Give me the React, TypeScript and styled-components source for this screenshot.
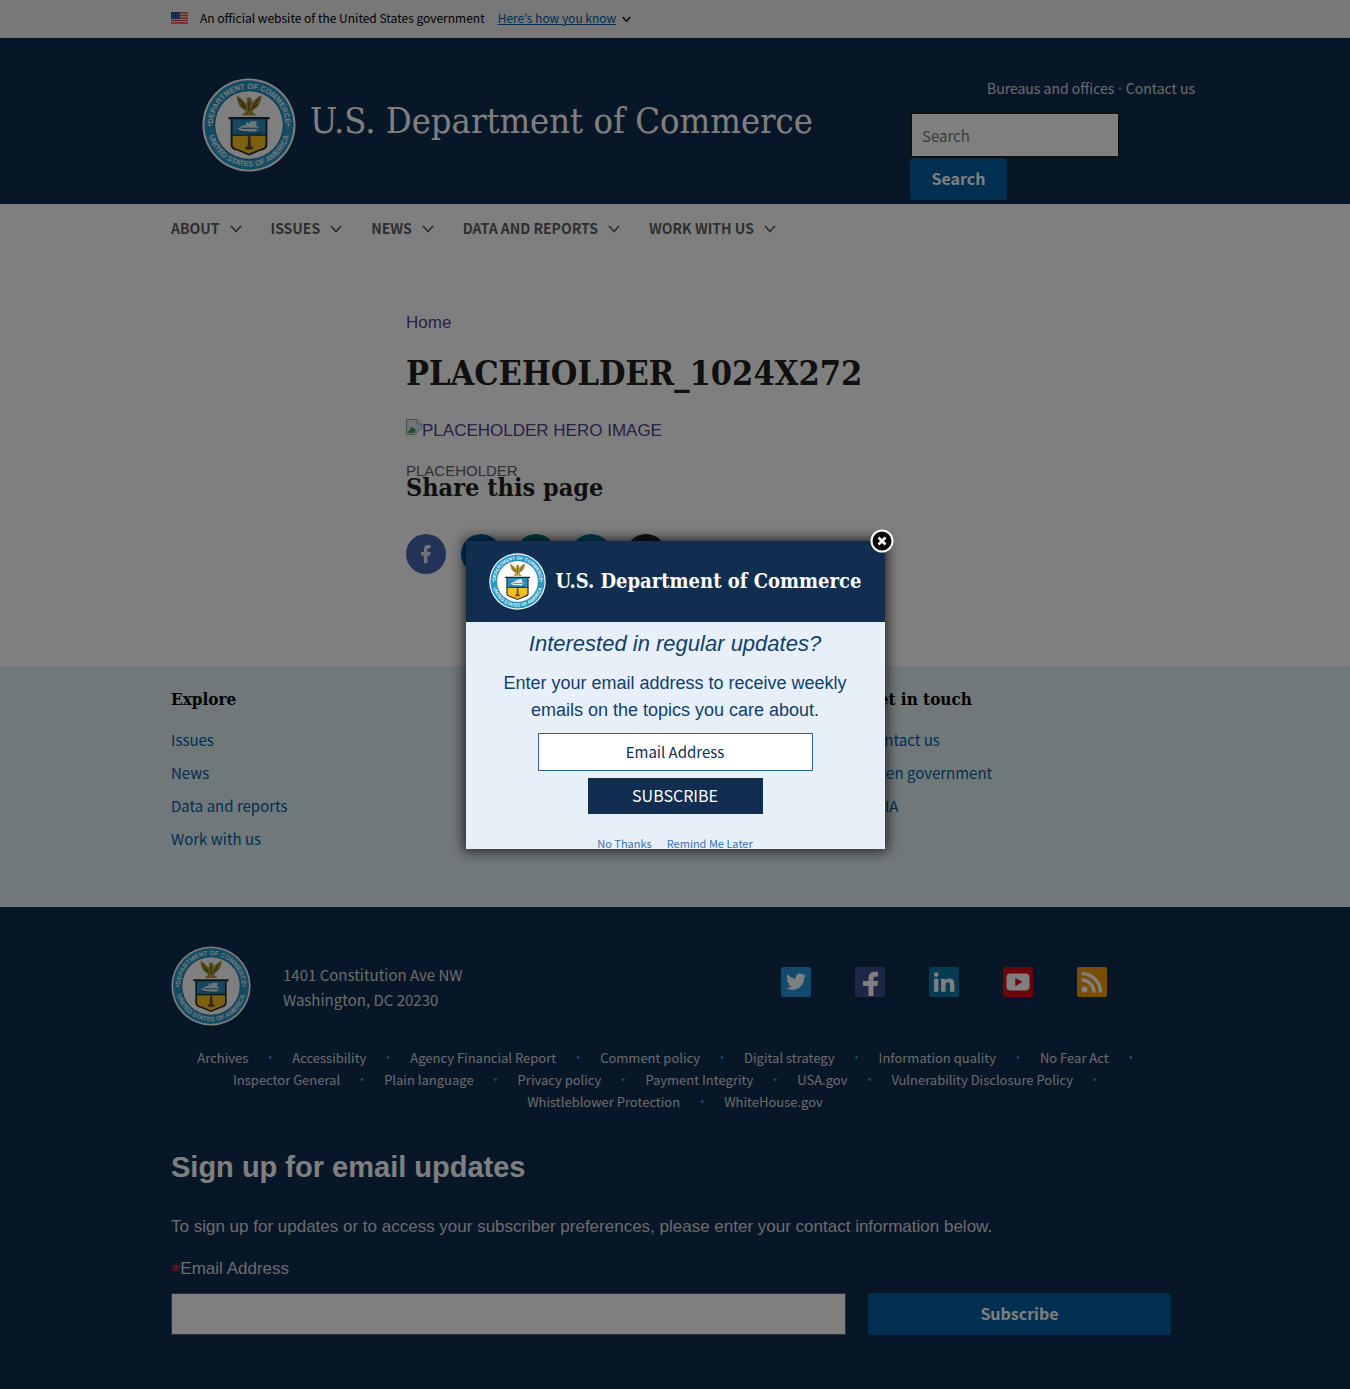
import React from "react";
import styled, { createGlobalStyle } from "styled-components";

const sans = `"Noto Sans CJK KR", "Noto Sans", sans-serif`;
const serif = `"DejaVu Serif Condensed", "DejaVu Serif", serif`;
const arial = `"Liberation Sans", Arial, sans-serif`;
const navy = "#112e51";
const blue = "#005ea2";

const GlobalStyle = createGlobalStyle`
  *, *::before, *::after { box-sizing: border-box; }
  html, body { margin: 0; background: #fff; }
  body { font-family: ${sans}; font-size: 15px; line-height: 24px; color: #212121; }
  h1, h2, h3, p, ul, figure, address { margin: 0; padding: 0; font-style: normal; }
  ul { list-style: none; }
  a { color: inherit; text-decoration: none; }
  button, input { font: inherit; margin: 0; border: 0; border-radius: 0; }
  button { cursor: pointer; }
  svg { display: block; flex: none; }
`;

const Container = styled.div`
  max-width: 1040px;
  margin: 0 auto;
  padding: 0 16px;
`;

/* Government banner */
const Banner = styled.div`
  background: #f1f1f1;
  font-size: 12px;
  line-height: 36px;
`;
const BannerRow = styled(Container)`
  display: flex;
  align-items: center;
  padding-bottom: 2px;
`;
const BannerText = styled.p`
  margin: 0 13px 0 12px;
  color: #000;
`;
const BannerButton = styled.button`
  display: flex;
  align-items: center;
  gap: 6px;
  padding: 0;
  background: none;
  color: #000;
  span { color: ${blue}; text-decoration: underline; }
`;

/* Header */
const HeaderBar = styled.header`
  background: ${navy};
`;
const HeaderRow = styled(Container)`
  display: flex;
  align-items: flex-start;
  padding: 40px 0 4px 47px;
`;
const Brand = styled.a`
  display: flex;
  gap: 14px;
  flex: 1;
  color: #fff;
  font-family: ${serif};
  font-size: 36px;
  line-height: 86px;
  white-space: nowrap;
`;
const HeaderSide = styled.div`
  width: 285px;
`;
const SideLinks = styled.p`
  display: flex;
  justify-content: flex-end;
  gap: 4px;
  margin-bottom: 13px;
  color: #5b8fb9;
  font-family: ${arial};
  font-size: 10px;
  line-height: 21px;
  a { color: #d6d7d9; font-family: ${sans}; font-size: 14px; }
`;
const SearchField = styled.input`
  display: block;
  width: 210px;
  height: 46px;
  padding: 0 10px;
  border: 2px solid #212121;
  background: #fff;
  color: #212121;
  font-size: 15px;
  &::placeholder { color: #757575; opacity: 1; }
`;
const PrimaryButton = styled.button<{ $wide?: boolean }>`
  width: ${(p) => (p.$wide ? "100%" : "97px")};
  height: 42px;
  padding: 0 0 2px;
  border-radius: 4px;
  background: ${blue};
  color: #fff;
  font-size: 16px;
  font-weight: 700;
`;

/* Navigation */
const NavList = styled.ul`
  display: flex;
  gap: 29px;
  padding: 12px 0 14px;
`;
const NavButton = styled.button`
  display: flex;
  align-items: center;
  gap: 10px;
  padding: 0;
  background: none;
  color: #5b5d61;
  font-size: 14px;
  font-weight: 700;
  line-height: 24px;
`;

/* Main */
const Main = styled(Container).attrs({ as: "main" })`
  padding: 57px 16px 92px 251px;
  font-family: ${arial};
  font-size: 17px;
`;
const Crumb = styled.nav`
  color: #54408f;
`;
const PageTitle = styled.h1`
  margin: 16px 0 24px;
  color: #212121;
  font-family: ${serif};
  font-size: 34px;
  line-height: 44px;
`;
const HeroLink = styled.a`
  display: flex;
  color: #54408f;
`;
const Caption = styled.figcaption`
  margin-top: 21px;
  color: #5b616b;
  font-size: 15px;
  line-height: 14px;
`;
const ShareTitle = styled.h2`
  color: #212121;
  font-family: ${serif};
  font-size: 25px;
  line-height: 20px;
`;
const ShareList = styled.ul`
  display: flex;
  gap: 15px;
  margin-top: 36px;
`;
const ShareLink = styled.a<{ $color: string }>`
  display: grid;
  place-items: center;
  width: 40px;
  height: 40px;
  border-radius: 50%;
  background: ${(p) => p.$color};
`;

/* Footer */
const FooterTop = styled.div`
  background: #e2f0f5;
`;
const FooterColumns = styled(Container)`
  display: grid;
  grid-template-columns: repeat(3, 1fr);
  column-gap: 34px;
  padding-top: 21px;
  padding-bottom: 52px;
`;
const FooterColumn = styled.section<{ $column: number }>`
  grid-column: ${(p) => p.$column};
  h3 {
    margin-bottom: 12px;
    color: #000;
    font-family: ${serif};
    font-size: 17px;
    line-height: 24px;
  }
  li { line-height: 33px; }
  a { color: ${blue}; }
`;
const FooterBottom = styled.div`
  padding: 39px 0 55px;
  background: ${navy};
  color: #d6d7d9;
`;
const AgencyRow = styled.div`
  display: flex;
  align-items: center;
  gap: 32px;
`;
const Address = styled.address`
  flex: 1;
  padding-top: 2px;
  line-height: 25px;
`;
const SocialList = styled.ul`
  display: flex;
  gap: 44px;
  margin: 0 72px 8px 0;
`;
const PolicyList = styled.ul`
  display: flex;
  flex-wrap: wrap;
  justify-content: center;
  margin-top: 21px;
  font-size: 13px;
  line-height: 22px;
`;
const PolicyItem = styled.li`
  display: flex;
  &:not(:last-child)::after {
    content: "•";
    width: 44px;
    color: #3e94cf;
    font-family: ${arial};
    font-size: 10px;
    text-align: center;
  }
`;
const Signup = styled.form`
  margin-top: 34px;
  font-family: ${arial};
  font-size: 17px;
  h2 {
    color: #fff;
    font-size: 29px;
    line-height: 40px;
  }
  p { margin-top: 28px; }
  label { display: block; margin: 18px 0 11px; }
`;
const Required = styled.span`
  color: #e31c3d;
  font-size: 24px;
  line-height: 20px;
  vertical-align: -6px;
`;
const SignupRow = styled.div`
  display: grid;
  grid-template-columns: 675fr 303fr;
  gap: 22px;
  padding-right: 8px;
  button { font-family: ${sans}; }
`;
const SignupInput = styled.input`
  width: 100%;
  height: 42px;
  padding: 0 10px;
  border: 1px solid #5b616b;
  background: #fff;
`;

/* Subscription dialog */
const Overlay = styled.div`
  position: fixed;
  inset: 0;
  display: grid;
  place-items: center;
  background: rgba(0, 0, 0, 0.5);
`;
const Dialog = styled.div`
  position: relative;
  width: 419px;
  box-shadow: 0 0 12px 2px rgba(0, 0, 0, 0.75);
`;
const DialogBody = styled.div`
  display: flex;
  flex-direction: column;
  align-items: center;
  height: 308px;
  overflow: hidden;
  background: #e7eff8;
  color: ${navy};
  font-family: ${arial};
  text-align: center;
`;
const DialogBrand = styled.div`
  display: flex;
  align-items: center;
  align-self: stretch;
  justify-content: center;
  gap: 10px;
  height: 81px;
  flex: none;
  background: ${navy};
  color: #fff;
  font-family: ${serif};
  font-size: 20px;
  font-weight: 700;
  white-space: nowrap;
`;
const DialogTitle = styled.h2`
  margin-top: 6px;
  color: #123f6d;
  font-size: 22px;
  font-style: italic;
  font-weight: 400;
  line-height: 32px;
`;
const DialogText = styled.p`
  margin: 10px 0 9px;
  padding: 0 32px;
  color: #123f6d;
  font-size: 18px;
  line-height: 27px;
`;
const DialogInput = styled.input`
  flex: none;
  width: 275px;
  height: 38px;
  border: 1px solid #2f6199;
  background: #fff;
  font-family: ${sans};
  font-size: 15px;
  text-align: center;
  &::placeholder { color: ${navy}; opacity: 1; }
`;
const DialogSubmit = styled.button`
  flex: none;
  width: 175px;
  height: 36px;
  margin-top: 7px;
  padding: 0 0 2px;
  background: ${navy};
  color: #fff;
  font-family: ${sans};
  font-size: 16px;
`;
const DialogLinks = styled.div`
  display: flex;
  gap: 15px;
  margin-top: 19px;
  color: #3a76b5;
  font-family: ${sans};
  font-size: 11px;
  line-height: 20px;
`;
const CloseButton = styled.button`
  position: absolute;
  top: -12px;
  right: -9px;
  padding: 0;
  border-radius: 50%;
  background: none;
`;

const Seal = ({ size, id }: { size: number; id: string }) => (
  <svg width={size} height={size} viewBox="0 0 100 100" role="img" aria-label="Department of Commerce seal">
    <defs>
      <path id={`${id}-top`} d="M11.500 50 A38.500 38.500 0 0 1 88.500 50" />
      <path id={`${id}-bottom`} d="M6 50 A44 44 0 0 0 94 50" />
    </defs>
    <circle cx="50" cy="50" r="49.500" fill="#fff" />
    <circle cx="50" cy="50" r="47.500" fill="#2798c6" />
    <circle cx="50" cy="50" r="36.500" fill="#fff" />
    <circle cx="50" cy="50" r="36.500" fill="none" stroke="#12668f" strokeWidth="1" />
    <g fill="#e6f3fa" fontFamily="Liberation Sans, sans-serif" fontSize="8" fontWeight="700" textAnchor="middle">
      <text><textPath href={`#${id}-top`} startOffset="50%">DEPARTMENT OF COMMERCE</textPath></text>
      <text><textPath href={`#${id}-bottom`} startOffset="50%">UNITED STATES OF AMERICA</textPath></text>
    </g>
    <circle cx="8" cy="50" r="1.200" fill="#fff" />
    <circle cx="92" cy="50" r="1.200" fill="#fff" />
    <path d="M37 18 C39 20 44 23 47 27 L48 25 L47 22 L50 20 L53 22 L53 26 C56 23 61 19 63.500 18.500 C63 25 61 30 56 33 L53.500 36 L58 40 H42 L46.500 36 L43.500 33 C39 30 37 25 37 18Z" fill="#b3953a" />
    <path d="M39 22 L46 31 M41 28 L47 33 M61 21 L54 31 M59 28 L53 33 M50 24 V35" stroke="#5a4c18" strokeWidth="1.200" />
    <path d="M28 41.500 H72 V44 H69.500 V72 Q69 76 62 77.500 L50 82.500 L38 77.500 Q31 76 30.500 72 V44 H28Z" fill="#1c2733" />
    <path d="M32.500 44 H67.500 V60 H32.500Z" fill="#2c8fc0" />
    <path d="M32.500 61.500 H67.500 V71.500 Q67 74.500 61 76 L50 80.500 L39 76 Q33 74.500 32.500 71.500Z" fill="#f5c020" />
    <path d="M38 54 L44 50 H47 V47 H49 V49 L52 46 H58 V51 L61 53 L57 57 H43Z" fill="#d9ebf4" />
    <path d="M35 58 Q43 56 50 58 T65 58 M42 53.500 H60" stroke="#17506f" strokeWidth="1" fill="none" />
    <path d="M49 62 H51.500 L52 73 H54 V76 H46 V73 H48.500Z" fill="#6a4a20" />
  </svg>
);

const Flag = () => (
  <svg width="17" height="12" viewBox="0 0 17 12" aria-hidden="true">
    <rect width="17" height="12" fill="#fff" />
    <path d="M0 1H17M0 3.500H17M0 6H17M0 8.500H17M0 11H17" stroke="#d9402c" strokeWidth="1.500" />
    <rect width="9" height="7" fill="#1f4b9f" />
    <path d="M1 2H8M1 4H8M1 6H8" stroke="#b8c8e8" strokeWidth=".5" strokeDasharray="1 1" />
  </svg>
);

const Chevron = ({ size }: { size: number }) => (
  <svg width={size} height={size} viewBox="0 0 12 12" fill="none" stroke="currentColor" strokeWidth="1.800" aria-hidden="true">
    <path d="M1 4 L6 9.500 L11 4" />
  </svg>
);

const BrokenImage = () => (
  <svg width="16" height="16" viewBox="0 0 16 16" aria-hidden="true">
    <path d="M.5 .5H11L15.500 5V9L12 12L9 15.500H.5Z" fill="#dce8f8" stroke="#9a9a9a" />
    <path d="M11 .5V5H15.500" fill="#fff" stroke="#9a9a9a" />
    <path d="M2 13 L6 8 L10 11 L8 14H2Z" fill="#4a9a48" />
    <path d="M3 6Q3 4 5 4Q8 3 8 6Z" fill="#fff" />
  </svg>
);

const glyphs: Record<string, string> = {
  facebook: "M13.500 22v-8.500h3l.5-3.700h-3.500V7.500c0-1 .4-1.700 1.800-1.700H17V2.400C16.600 2.300 15.500 2.200 14.300 2.200c-2.800 0-4.600 1.700-4.600 4.700v2.900H6.600v3.700h3.100V22z",
  twitter: "M23 4.900c-.8.400-1.700.6-2.600.7.900-.6 1.600-1.400 2-2.500-.9.500-1.800.9-2.900 1.100A4.500 4.500 0 0 0 11.800 8.300C8 8.100 4.700 6.300 2.500 3.600c-1.200 2-.6 4.700 1.400 6-.7 0-1.400-.2-2-.6 0 2.200 1.500 4.100 3.600 4.500-.6.200-1.400.2-2 .1.600 1.800 2.200 3.100 4.200 3.100A9 9 0 0 1 1 18.600c2 1.300 4.400 2 6.900 2 8.400 0 13.200-7.100 12.900-13.400.9-.6 1.600-1.400 2.200-2.300z",
  linkedin: "M3 9h4v12H3zM5 3a2.200 2.200 0 1 1 0 4.400A2.200 2.200 0 0 1 5 3zM9.500 9h3.800v1.700c.6-1.100 1.900-2 3.800-2 4 0 4.700 2.600 4.700 6V21h-4v-5.600c0-1.400 0-3.200-1.900-3.200s-2.300 1.500-2.300 3V21h-4z",
  mail: "M3 5h18v14H3zM3 5l9 8 9-8",
};
const Glyph = ({ name, size }: { name: string; size: number }) => (
  <svg width={size} height={size} viewBox="0 0 24 24" fill="#e4e6ee" aria-hidden="true"><path d={glyphs[name]} /></svg>
);

const SocialIcon = ({ name }: { name: string }) => {
  const fills: Record<string, string> = { twitter: "#2595db", facebook: "#3c4f8e", linkedin: "#0b78a8", youtube: "#d80a12", rss: "#f29a05" };
  return (
    <svg width="30" height="30" viewBox="0 0 30 30" aria-hidden="true">
      <rect width="30" height="30" rx="2" fill={fills[name]} />
      {name === "twitter" && <path transform="translate(4 4) scale(.92)" fill="#fff" d={glyphs.twitter} />}
      {name === "facebook" && <path fill="#fff" d="M13.500 29V19H8v-5h5.500V11c0-4 2.500-6.300 6.500-6.300h3v4.800h-2.200c-1.700 0-2.300.7-2.300 2V14h4.500l-.7 5h-3.800v10z" />}
      {name === "linkedin" && <path transform="translate(1.800 2) scale(1.080)" fill="#fff" d={glyphs.linkedin} />}
      {name === "youtube" && <><rect x="3.500" y="6.500" width="23" height="17" rx="4" fill="#fff" /><path d="M12.300 10.800L19.500 15L12.300 19.200Z" fill="#d80a12" /></>}
      {name === "rss" && <><circle cx="7.500" cy="22.500" r="3" fill="#fff" /><path d="M4.500 13A12.500 12.500 0 0 1 17 25.500M4.500 6.500A19 19 0 0 1 23.500 25.500" fill="none" stroke="#fff" strokeWidth="3.400" /></>}
    </svg>
  );
};

const navItems = ["ABOUT", "ISSUES", "NEWS", "DATA AND REPORTS", "WORK WITH US"];
const shares = [
  { label: "Facebook", color: "#4767b0", icon: "facebook" },
  { label: "LinkedIn", color: "#0068b8", icon: "linkedin" },
  { label: "Email", color: "#007a7a", icon: "mail" },
  { label: "Twitter", color: "#0079c0", icon: "twitter" },
  { label: "X", color: "#222222", icon: "twitter" },
];
const columns = [
  { title: "Explore", column: 1, links: ["Issues", "News", "Data and reports", "Work with us"] },
  { title: "Get in touch", column: 3, links: ["Contact us", "Open government", "FOIA"] },
];
const socials = ["twitter", "facebook", "linkedin", "youtube", "rss"];
const policies = [
  "Archives", "Accessibility", "Agency Financial Report", "Comment policy", "Digital strategy",
  "Information quality", "No Fear Act", "Inspector General", "Plain language", "Privacy policy",
  "Payment Integrity", "USA.gov", "Vulnerability Disclosure Policy", "Whistleblower Protection", "WhiteHouse.gov",
];

export default function App() {
  return (
    <>
      <GlobalStyle />
      <Banner>
        <BannerRow>
          <Flag />
          <BannerText>An official website of the United States government</BannerText>
          <BannerButton type="button"><span>Here’s how you know</span><Chevron size={9} /></BannerButton>
        </BannerRow>
      </Banner>

      <HeaderBar>
        <HeaderRow>
          <Brand href="#"><Seal size={94} id="seal-header" />U.S. Department of Commerce</Brand>
          <HeaderSide>
            <SideLinks><a href="#">Bureaus and offices</a>•<a href="#">Contact us</a></SideLinks>
            <form role="search">
              <SearchField type="search" placeholder="Search" aria-label="Search" />
              <PrimaryButton type="button">Search</PrimaryButton>
            </form>
          </HeaderSide>
        </HeaderRow>
      </HeaderBar>

      <Container as="nav">
        <NavList>
          {navItems.map((item) => (
            <li key={item}><NavButton type="button">{item}<Chevron size={12} /></NavButton></li>
          ))}
        </NavList>
      </Container>

      <Main>
        <Crumb><a href="#">Home</a></Crumb>
        <PageTitle>PLACEHOLDER_1024X272</PageTitle>
        <figure>
          <HeroLink href="#"><BrokenImage />PLACEHOLDER HERO IMAGE</HeroLink>
          <Caption>PLACEHOLDER</Caption>
        </figure>
        <ShareTitle>Share this page</ShareTitle>
        <ShareList>
          {shares.map((s) => (
            <li key={s.label}>
              <ShareLink href="#" aria-label={s.label} $color={s.color}><Glyph name={s.icon} size={22} /></ShareLink>
            </li>
          ))}
        </ShareList>
      </Main>

      <footer>
        <FooterTop>
          <FooterColumns>
            {columns.map((c) => (
              <FooterColumn key={c.title} $column={c.column}>
                <h3>{c.title}</h3>
                <ul>{c.links.map((l) => <li key={l}><a href="#">{l}</a></li>)}</ul>
              </FooterColumn>
            ))}
          </FooterColumns>
        </FooterTop>
        <FooterBottom>
          <Container>
            <AgencyRow>
              <Seal size={80} id="seal-footer" />
              <Address>1401 Constitution Ave NW<br />Washington, DC 20230</Address>
              <SocialList>
                {socials.map((s) => <li key={s}><a href="#" aria-label={s}><SocialIcon name={s} /></a></li>)}
              </SocialList>
            </AgencyRow>
            <PolicyList>
              {policies.map((p) => <PolicyItem key={p}><a href="#">{p}</a></PolicyItem>)}
            </PolicyList>
            <Signup>
              <h2>Sign up for email updates</h2>
              <p>To sign up for updates or to access your subscriber preferences, please enter your contact information below.</p>
              <label htmlFor="signup-email"><Required>*</Required>Email Address</label>
              <SignupRow>
                <SignupInput id="signup-email" type="email" />
                <PrimaryButton type="button" $wide>Subscribe</PrimaryButton>
              </SignupRow>
            </Signup>
          </Container>
        </FooterBottom>
      </footer>

      <Overlay>
        <Dialog role="dialog" aria-label="Subscribe">
          <DialogBody>
            <DialogBrand><Seal size={57} id="seal-dialog" />U.S. Department of Commerce</DialogBrand>
            <DialogTitle>Interested in regular updates?</DialogTitle>
            <DialogText>Enter your email address to receive weekly emails on the topics you care about.</DialogText>
            <DialogInput type="email" placeholder="Email Address" aria-label="Email Address" />
            <DialogSubmit type="button">SUBSCRIBE</DialogSubmit>
            <DialogLinks><a href="#">No Thanks</a><a href="#">Remind Me Later</a></DialogLinks>
          </DialogBody>
          <CloseButton type="button" aria-label="Close">
            <svg width="24" height="24" viewBox="0 0 24 24" aria-hidden="true">
              <circle cx="12" cy="12" r="10.500" fill="#0a0a0a" stroke="#fff" strokeWidth="2" />
              <path d="M8.500 8.500L15.500 15.500M15.500 8.500L8.500 15.500" stroke="#fff" strokeWidth="2.600" />
            </svg>
          </CloseButton>
        </Dialog>
      </Overlay>
    </>
  );
}
